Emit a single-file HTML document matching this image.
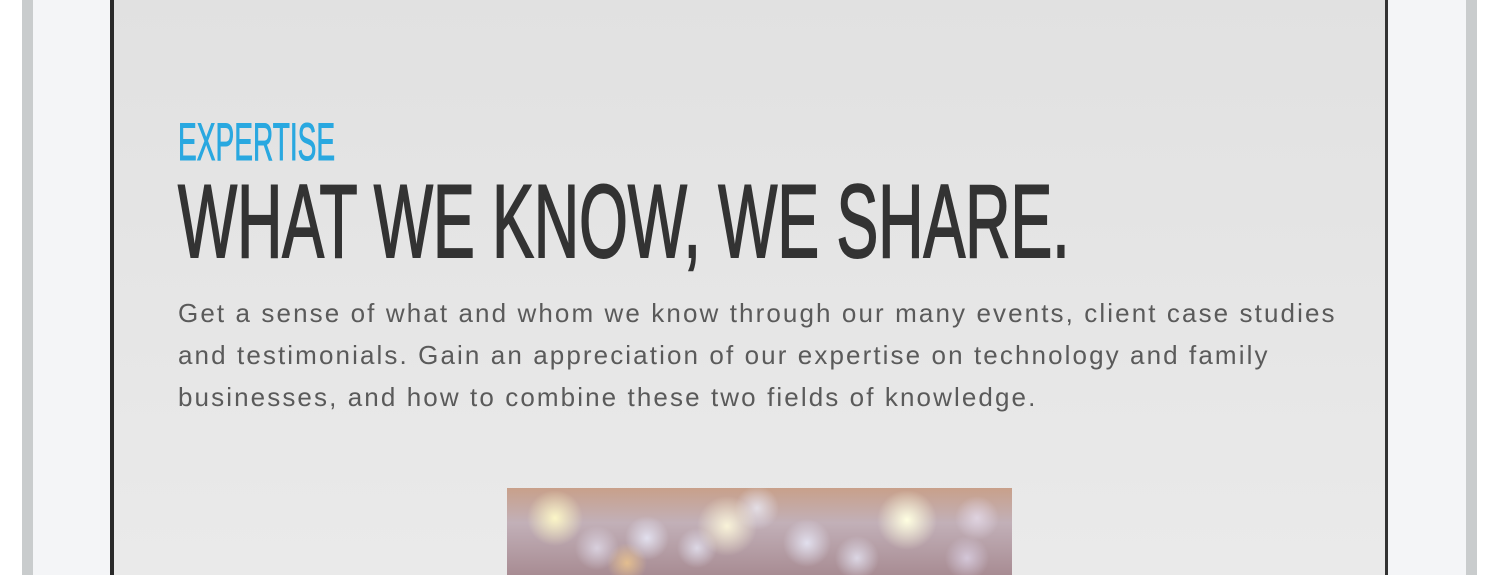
<!DOCTYPE html>
<html><head><style>
html,body{margin:0;padding:0;}
body{width:1500px;height:575px;position:relative;overflow:hidden;background:#fff;font-family:"Liberation Sans",sans-serif;}
.bar{position:absolute;top:0;height:575px;background:#c9cccd;}
.bez{position:absolute;top:0;height:575px;background:#f4f5f7;}
.scr{position:absolute;left:110px;top:0;width:1278px;height:575px;background:linear-gradient(#e1e1e1,#eaeaea);border-left:4px solid #2a2a2a;border-right:3px solid #333;box-sizing:border-box;}
.t{position:absolute;white-space:nowrap;transform-origin:left top;}
.img{position:absolute;left:507px;top:488px;width:505px;height:87px;background:
radial-gradient(circle at 48px 30px,rgba(255,250,200,.95) 0,rgba(255,240,190,0) 28px),
radial-gradient(circle at 220px 38px,rgba(255,250,220,.9) 0,rgba(255,240,200,0) 30px),
radial-gradient(circle at 400px 32px,rgba(255,255,225,1) 0,rgba(255,250,220,0) 30px),
radial-gradient(circle at 140px 50px,rgba(230,230,245,.9) 0,rgba(220,220,240,0) 22px),
radial-gradient(circle at 190px 60px,rgba(230,230,245,.8) 0,rgba(220,220,240,0) 20px),
radial-gradient(circle at 300px 55px,rgba(230,230,245,.9) 0,rgba(225,225,240,0) 24px),
radial-gradient(circle at 350px 70px,rgba(230,230,245,.8) 0,rgba(225,225,240,0) 22px),
radial-gradient(circle at 250px 20px,rgba(235,235,245,.8) 0,rgba(225,225,240,0) 22px),
radial-gradient(circle at 90px 60px,rgba(225,220,235,.8) 0,rgba(225,225,240,0) 22px),
radial-gradient(circle at 120px 75px,rgba(240,200,140,.8) 0,rgba(240,200,140,0) 20px),
radial-gradient(circle at 460px 70px,rgba(220,210,230,.8) 0,rgba(210,200,225,0) 22px),
radial-gradient(circle at 470px 30px,rgba(230,220,235,.8) 0,rgba(210,200,225,0) 22px),
linear-gradient(#c8a08a,#c2b0b8 40%,#a88c93);}
</style></head><body>
<div class="bar" style="left:22px;width:11px"></div>
<div class="bez" style="left:33px;width:77px"></div>
<div class="bez" style="left:1388px;width:78px"></div>
<div class="bar" style="left:1466px;width:11px"></div>
<div class="scr"></div>
<div class="t" style="left:178px;top:112px;font-size:53px;color:#29a8e0;-webkit-text-stroke:1px #29a8e0;transform:scaleX(0.53)">EXPERTISE</div>
<div class="t" style="left:178px;top:163px;font-size:104px;color:#333;-webkit-text-stroke:2px #333;transform:scaleX(0.602)">WHAT WE KNOW, WE SHARE.</div>
<div class="t" style="left:178px;top:292px;font-size:26px;line-height:42px;color:#5a5a5a;letter-spacing:2.1px;">Get a sense of what and whom we know through our many events, client case studies<br>and testimonials. Gain an appreciation of our expertise on technology and family<br>businesses, and how to combine these two fields of knowledge.</div>
<div class="img"></div>
</body></html>
